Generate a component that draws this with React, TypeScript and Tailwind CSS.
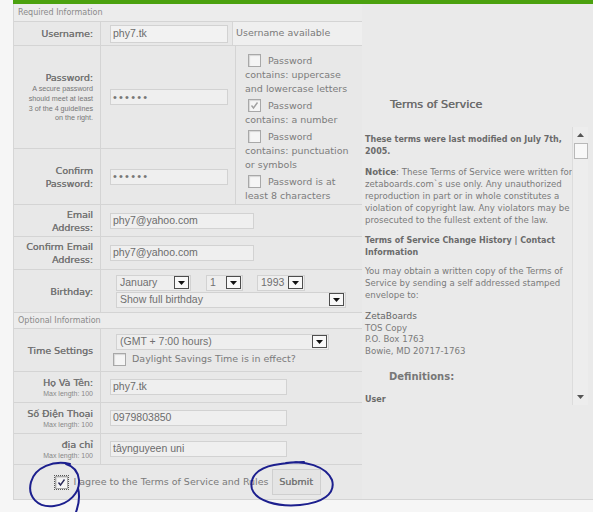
import React from "react";
import clsx from "clsx";

// Small form pieces
function Check({ checked, dark, className }: { checked?: boolean; dark?: boolean; className?: string }) {
  return (
    <span
      className={clsx(
        "inline-flex items-center justify-center w-[13px] h-[13px] border border-[#a8a8a8] bg-[#f5f5f5] shadow-[inset_1px_1px_1px_#d6d6d6] align-middle",
        className
      )}
    >
      {checked && (
        <svg width="9" height="9" viewBox="0 0 9 9">
          <path d="M1.5 4.5 L3.5 7 L7.5 1.5" fill="none" stroke={dark ? "#2b2b5a" : "#a0a0a0"} strokeWidth="1.4" />
        </svg>
      )}
    </span>
  );
}

function Field({ value, className, dots }: { value: string; className?: string; dots?: boolean }) {
  return (
    <div
      className={clsx(
        "flex items-center h-[16px] border border-[#d2d2d2] bg-[#efefef] pl-[2px] font-['Liberation_Sans',Arial,sans-serif] text-[10.5px] text-[#6c6c6c] whitespace-nowrap overflow-hidden",
        className
      )}
    >
      {dots ? <span className="text-[11px] tracking-[2.2px] text-[#777]">••••••</span> : value}
    </div>
  );
}

function Select({ value, className }: { value: string; className?: string }) {
  return (
    <div
      className={clsx(
        "flex items-center justify-between h-[16px] border border-[#d2d2d2] bg-[#eeeeee] pl-[3px] pr-[1px] font-['Liberation_Sans',Arial,sans-serif] text-[10.5px] text-[#707070] whitespace-nowrap",
        className
      )}
    >
      <span>{value}</span>
      <span className="flex items-center justify-center w-[15px] h-[13px] border border-[#4d4d4d] bg-[#f8f8f8]">
        <svg width="7" height="4" viewBox="0 0 7 4">
          <path d="M0 0 H7 L3.5 4 Z" fill="#111" />
        </svg>
      </span>
    </div>
  );
}

const labelText =
  "text-[9.5px] leading-[13px] text-[#737373] [text-shadow:0.25px_0_0_#737373] whitespace-nowrap";
const maxLen = "font-['Liberation_Sans',Arial,sans-serif] text-[7px] leading-[10px] text-[#888]";

function Label({ children, className }: { children: React.ReactNode; className?: string }) {
  return (
    <div
      className={clsx(
        "w-[87px] shrink-0 border-r border-[#d4d4d4] flex flex-col items-end justify-center pr-[7px] text-right",
        className
      )}
    >
      {children}
    </div>
  );
}

function Row({ h, label, children }: { h: string; label: React.ReactNode; children: React.ReactNode }) {
  return (
    <div className={clsx("flex border-b border-[#d4d4d4]", h)}>
      <Label>{label}</Label>
      <div className="flex-1 flex flex-col justify-center pl-[9px]">{children}</div>
    </div>
  );
}

function Header({ text, h }: { text: string; h: string }) {
  return (
    <div className={clsx("flex items-center pl-[4px] border-b border-[#d4d4d4] bg-[#ececec] text-[8px] text-[#8a8a8a]", h)}>
      {text}
    </div>
  );
}

export default function App() {
  return (
    <div className="relative w-[593px] h-[512px] bg-[#f6f6f6] pl-[13px] overflow-hidden font-['DejaVu_Sans',sans-serif]">
      <div className="h-[500px] flex border-t-4 border-t-[#4ba10e] border-b border-b-[#d4d4d4] bg-[#eaeaea]">
        {/* Registration form */}
        <div className="w-[349px] shrink-0 border-l border-[#d6d6d6] flex flex-col bg-[#e8e8e8]">
          <Header text="Required Information" h="h-[18px]" />

          <div className="flex h-[24px] border-b border-[#d4d4d4]">
            <Label>
              <span className={labelText}>Username:</span>
            </Label>
            <div className="w-[131px] flex items-center pl-[9px]">
              <Field value="phy7.tk" className="w-[118px] h-[18px] border-[#8cc068] bg-[#f2f2f2]" />
            </div>
            <div className="flex-1 flex items-center pl-[3px] border-l border-[#d6d6d6] bg-[#efefef] text-[9.5px] text-[#7a7a7a]">
              Username available
            </div>
          </div>

          <div className="flex h-[159px] border-b border-[#d4d4d4]">
            <div className="w-[221px] flex flex-col">
              <div className="flex h-[103px] border-b border-[#d4d4d4]">
                <Label>
                  <span className={labelText}>Password:</span>
                  <span className="font-['Liberation_Sans',Arial,sans-serif] text-[7.2px] leading-[9.7px] text-[#777]">
                    A secure password
                    <br />
                    should meet at least
                    <br />3 of the 4 guidelines
                    <br />
                    on the right.
                  </span>
                </Label>
                <div className="flex-1 flex items-center pl-[9px]">
                  <Field value="" dots className="w-[118px]" />
                </div>
              </div>
              <div className="flex flex-1">
                <Label>
                  <span className={labelText}>
                    Confirm
                    <br />
                    Password:
                  </span>
                </Label>
                <div className="flex-1 flex items-center pl-[9px]">
                  <Field value="" dots className="w-[118px]" />
                </div>
              </div>
            </div>
            <div className="flex-1 border-l border-[#d4d4d4] pt-[8px] pl-[9px] text-[9.5px] leading-[14px] text-[#7c7c7c] whitespace-nowrap flex flex-col gap-[3px]">
              <div>
                <Check className="ml-[3px] mr-[7px] -mt-[3px]" />
                Password
                <br />
                contains: uppercase
                <br />
                and lowercase letters
              </div>
              <div>
                <Check checked className="ml-[3px] mr-[7px] -mt-[3px]" />
                Password
                <br />
                contains: a number
              </div>
              <div>
                <Check className="ml-[3px] mr-[7px] -mt-[3px]" />
                Password
                <br />
                contains: punctuation
                <br />
                or symbols
              </div>
              <div>
                <Check className="ml-[3px] mr-[7px] -mt-[3px]" />
                Password is at
                <br />
                least 8 characters
              </div>
            </div>
          </div>

          <Row
            h="h-[32px]"
            label={
              <span className={labelText}>
                Email
                <br />
                Address:
              </span>
            }
          >
            <Field value="phy7@yahoo.com" className="w-[144px]" />
          </Row>
          <Row
            h="h-[33px]"
            label={
              <span className={labelText}>
                Confirm Email
                <br />
                Address:
              </span>
            }
          >
            <Field value="phy7@yahoo.com" className="w-[144px]" />
          </Row>
          <div className="flex h-[43px] border-b border-[#d4d4d4]">
            <Label>
              <span className={labelText}>Birthday:</span>
            </Label>
            <div className="flex-1 flex flex-col justify-center gap-[1px] pl-[15px]">
              <div className="flex gap-[15px]">
                <Select value="January" className="w-[75px] h-[15px]" />
                <Select value="1" className="w-[37px] h-[15px]" />
                <Select value="1993" className="w-[48px] h-[15px] -ml-[1px]" />
              </div>
              <Select value="Show full birthday" className="w-[230px] h-[15px]" />
            </div>
          </div>

          <Header text="Optional Information" h="h-[16px]" />

          <div className="flex h-[43px] border-b border-[#d4d4d4]">
            <Label>
              <span className={labelText}>Time Settings</span>
            </Label>
            <div className="flex-1 flex flex-col justify-center gap-[2px] pl-[12px]">
              <Select value="(GMT + 7:00 hours)" className="w-[213px] ml-[3px]" />
              <div className="flex items-center text-[9.5px] text-[#7a7a7a] whitespace-nowrap">
                <Check className="mr-[6px]" />
                Daylight Savings Time is in effect?
              </div>
            </div>
          </div>

          <Row
            h="h-[31px]"
            label={
              <>
                <span className={clsx(labelText, "leading-[12px]")}>Họ Và Tên:</span>
                <span className={maxLen}>Max length: 100</span>
              </>
            }
          >
            <Field value="phy7.tk" className="w-[177px]" />
          </Row>
          <Row
            h="h-[31px]"
            label={
              <>
                <span className={clsx(labelText, "leading-[12px]")}>Số Điện Thoại</span>
                <span className={maxLen}>Max length: 100</span>
              </>
            }
          >
            <Field value="0979803850" className="w-[177px]" />
          </Row>
          <Row
            h="h-[31px]"
            label={
              <>
                <span className={clsx(labelText, "leading-[12px]")}>địa chỉ</span>
                <span className={maxLen}>Max length: 100</span>
              </>
            }
          >
            <Field value="tâynguyeen uni" className="w-[177px]" />
          </Row>

          <div className="flex-1 flex items-center justify-center text-[9.5px] text-[#7a7a7a] whitespace-nowrap">
            <span className="flex outline outline-1 outline-dotted outline-[#555]">
              <Check checked dark />
            </span>
            <span className="ml-[5px]">I agree to the Terms of Service and Rules</span>
            <button className="ml-[3px] w-[49px] h-[26px] border border-[#cfcfcf] bg-[#e4e4e4] text-[9.5px] text-[#777] [text-shadow:0.3px_0_0_#777]">
              Submit
            </button>
          </div>
        </div>

        {/* Terms of service panel */}
        <div className="flex-1 min-w-0 flex flex-col pt-[93px]">
          <div className="pl-[28px] h-[16px] flex items-center text-[11.2px] text-[#6c6c6c] [text-shadow:0.4px_0_0_#6c6c6c]">
            Terms of Service
          </div>
          <div className="mt-[14px] h-[278px] flex">
            <div className="flex-1 min-w-0 overflow-hidden pl-[3px] pt-[7px] text-[8.6px] leading-[12px] text-[#7a7a7a] whitespace-nowrap">
              <p className="font-bold text-[8px] text-[#6a6a6a]">
                These terms were last modified on July 7th,
                <br />
                2005.
              </p>
              <p className="mt-[8px]">
                <b className="text-[#6a6a6a]">Notice</b>: These Terms of Service were written for
                <br />
                zetaboards.com`s use only. Any unauthorized
                <br />
                reproduction in part or in whole constitutes a
                <br />
                violation of copyright law. Any violators may be
                <br />
                prosecuted to the fullest extent of the law.
              </p>
              <p className="mt-[9px] font-bold text-[8px] text-[#6a6a6a]">
                Terms of Service Change History | Contact
                <br />
                Information
              </p>
              <p className="mt-[6px]">
                You may obtain a written copy of the Terms of
                <br />
                Service by sending a self addressed stamped
                <br />
                envelope to:
              </p>
              <p className="mt-[10px] leading-[11.7px]">
                <span className="text-[9px] text-[#666]">ZetaBoards</span>
                <br />
                TOS Copy
                <br />
                P.O. Box 1763
                <br />
                Bowie, MD 20717-1763
              </p>
              <p className="mt-[12px] pl-[24px] font-bold text-[10px] leading-[14px] text-[#777]">Definitions:</p>
              <p className="mt-[10px] font-bold text-[8px] text-[#6a6a6a]">User</p>
            </div>
            <div className="w-[16px] mr-[5px] shrink-0 border-l border-[#dcdcdc] bg-[#ededed] flex flex-col items-center">
              <svg width="7" height="4" viewBox="0 0 7 4" className="mt-[6px]">
                <path d="M0 4 H7 L3.5 0 Z" fill="#555" />
              </svg>
              <div className="mt-[6px] w-[14px] h-[16px] border border-[#b8b8b8] bg-[#f8f8f8]" />
              <div className="flex-1" />
              <svg width="7" height="4" viewBox="0 0 7 4" className="mb-[6px]">
                <path d="M0 0 H7 L3.5 4 Z" fill="#555" />
              </svg>
            </div>
          </div>
        </div>
      </div>

      {/* Hand-drawn blue marks */}
      <svg className="absolute inset-0 pointer-events-none" width="593" height="512" viewBox="0 0 593 512">
        <path
          d="M70 464 C54 460 35 467 31 482 C27 497 38 508 54 506 C69 504 80 493 79 480 C78 471 73 466 66 464 M78 488 C80 496 79 504 76 512"
          fill="none"
          stroke="#1c1f8e"
          strokeWidth="2"
          strokeLinecap="round"
        />
        <path
          d="M286 463 C304 460 326 466 332 480 C336 494 322 503 300 505 C277 507 256 501 252 489 C249 477 258 468 274 465 C285 463 296 462 304 462"
          fill="none"
          stroke="#1c1f8e"
          strokeWidth="2"
          strokeLinecap="round"
        />
      </svg>
    </div>
  );
}
